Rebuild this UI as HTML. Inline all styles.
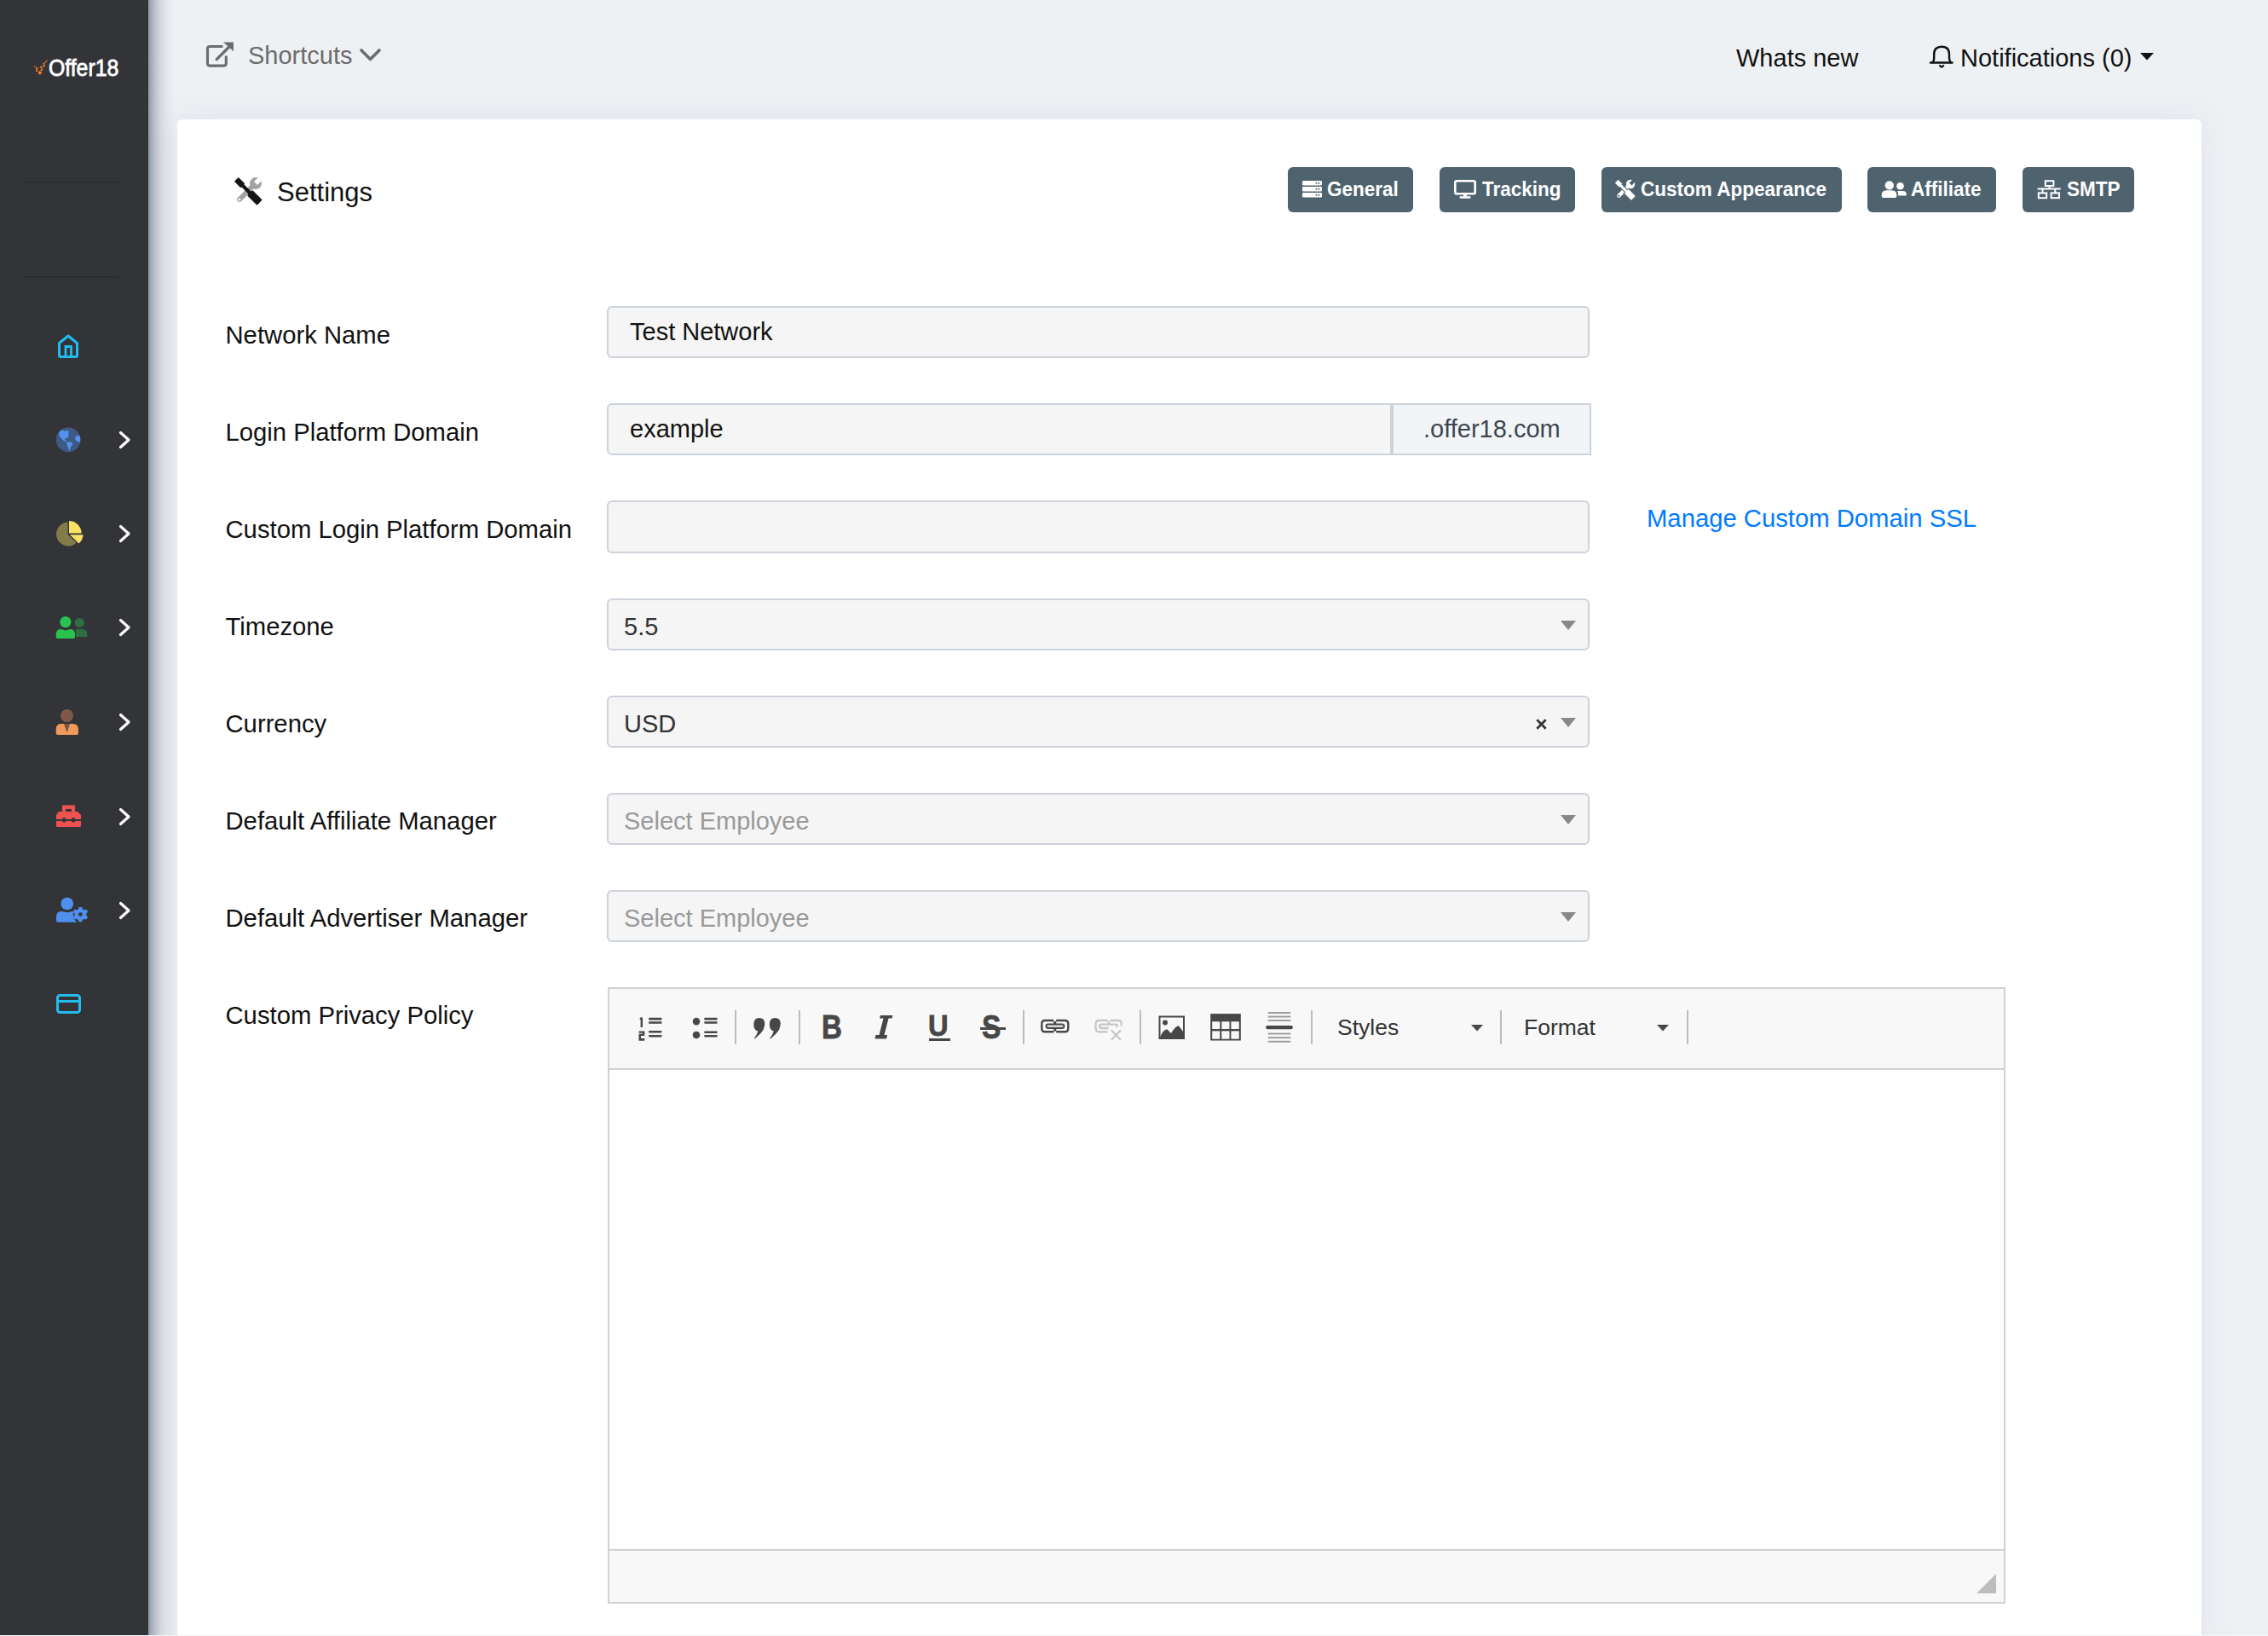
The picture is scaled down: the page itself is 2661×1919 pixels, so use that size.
<!DOCTYPE html><html><head><meta charset="utf-8"><style>
html,body{margin:0;padding:0;}
body{width:2661px;height:1919px;overflow:hidden;background:#eef1f4;position:relative;font-family:'Liberation Sans', sans-serif;}
.a{position:absolute;}
</style></head><body>
<div class="a" style="left:0;top:0;width:174px;height:1919px;background:#333438;"></div>
<div class="a" style="left:174px;top:0;width:34px;height:1919px;background:linear-gradient(90deg,#8f99a8 0px,#a3abb8 3px,#bcc3ce 8px,#d3d8e0 14px,#e3e7ec 21px,#eef1f4 32px);"></div>
<svg class="a" style="left:36px;top:68px" width="24" height="22" viewBox="36 68 24 22">
<g fill="#f57c20">
<rect x="45" y="83.6" width="3.6" height="3.6" rx="0.6"/>
<rect x="42" y="81.8" width="2.2" height="2.2" rx="0.4"/>
<rect x="41.9" y="79.3" width="2.3" height="2.3" rx="0.4"/>
<rect x="40" y="77" width="1.8" height="1.8" rx="0.4" opacity="0.8"/>
<rect x="47.7" y="80.6" width="2.3" height="2.3" rx="0.4"/>
<rect x="47.2" y="77.5" width="2.3" height="2.3" rx="0.4"/>
<rect x="50.6" y="75.6" width="2.3" height="2.3" rx="0.4"/>
<rect x="50.5" y="73.4" width="1.8" height="1.8" rx="0.4"/>
<rect x="52.6" y="72.5" width="1.5" height="1.5" rx="0.3"/>
<rect x="54.2" y="70.8" width="1.4" height="1.4" rx="0.3"/>
<rect x="49.8" y="78.8" width="1.2" height="1.2" rx="0.3"/>
<rect x="44.8" y="78.8" width="1" height="1" rx="0.3"/>
</g></svg>
<div style="position:absolute;left:57px;top:66px;font:400 28px/28px 'Liberation Sans', sans-serif;color:#fff;white-space:pre;transform:scaleX(0.885);transform-origin:0 0;-webkit-text-stroke:0.8px #fff;">Offer18</div>
<div class="a" style="left:28px;top:213px;width:112px;height:2px;background:#2b2c30;"></div>
<div class="a" style="left:28px;top:324px;width:112px;height:2px;background:#2b2c30;"></div>
<svg class="a" style="left:134px;top:500px" width="24" height="32" viewBox="0 0 24 32"><path d="M7.5 7.5 L17 16 L7.5 24.5" fill="none" stroke="#fff" stroke-width="3.2" stroke-linecap="round" stroke-linejoin="round"/></svg>
<svg class="a" style="left:134px;top:610px" width="24" height="32" viewBox="0 0 24 32"><path d="M7.5 7.5 L17 16 L7.5 24.5" fill="none" stroke="#fff" stroke-width="3.2" stroke-linecap="round" stroke-linejoin="round"/></svg>
<svg class="a" style="left:134px;top:720px" width="24" height="32" viewBox="0 0 24 32"><path d="M7.5 7.5 L17 16 L7.5 24.5" fill="none" stroke="#fff" stroke-width="3.2" stroke-linecap="round" stroke-linejoin="round"/></svg>
<svg class="a" style="left:134px;top:831px" width="24" height="32" viewBox="0 0 24 32"><path d="M7.5 7.5 L17 16 L7.5 24.5" fill="none" stroke="#fff" stroke-width="3.2" stroke-linecap="round" stroke-linejoin="round"/></svg>
<svg class="a" style="left:134px;top:942px" width="24" height="32" viewBox="0 0 24 32"><path d="M7.5 7.5 L17 16 L7.5 24.5" fill="none" stroke="#fff" stroke-width="3.2" stroke-linecap="round" stroke-linejoin="round"/></svg>
<svg class="a" style="left:134px;top:1052px" width="24" height="32" viewBox="0 0 24 32"><path d="M7.5 7.5 L17 16 L7.5 24.5" fill="none" stroke="#fff" stroke-width="3.2" stroke-linecap="round" stroke-linejoin="round"/></svg>
<svg class="a" style="left:60px;top:385px" width="40" height="40" viewBox="0 0 40 40"><path d="M9.5 17.5 L20 9 L30.5 17.5 L30.5 32 Q30.5 33.5 29 33.5 L11 33.5 Q9.5 33.5 9.5 32 Z" fill="none" stroke="#22bdee" stroke-width="3" stroke-linejoin="round"/><path d="M17 33.5 V21.5 H23.5 V33.5" fill="none" stroke="#22bdee" stroke-width="2.8"/></svg>
<svg class="a" style="left:60px;top:496px" width="40" height="40" viewBox="0 0 40 40">
<circle cx="20.1" cy="19.9" r="14.3" fill="#3e5a84"/>
<path d="M9.4 11.1 Q11 8.5 13.3 8.2 Q15 9 16.4 10.2 Q17.5 8.8 19.1 9 Q21.2 9.8 21 11.1 Q20.2 12.3 20.4 13.6 Q20.5 16.5 19.5 17.8 Q17.5 17.6 16.4 18.4 Q15.3 19.2 16.5 20 Q18 20.8 18.5 21.5 Q16 21.5 14.9 20.9 Q13 19.8 12.1 18.4 Q9.5 16 9.1 13.6 Z" fill="#5591ef"/>
<path d="M18.2 22.4 Q21.5 22 24 22.7 Q25.6 23.6 25.3 24.9 Q24.5 26.5 23.4 27.6 Q22.6 30.5 21.6 32.8 Q20.4 31.5 20.1 29.8 Q19.5 27.5 18.6 25.5 Q17.8 23.5 18.2 22.4 Z" fill="#5591ef"/>
<path d="M28 18.1 Q28.8 15.5 30.5 15.1 L32.9 15.1 Q34 16 34.3 18.4 Q34.4 20.5 33.8 22.7 Q31.5 22.5 30.1 21.5 Q28.3 20 28 18.1 Z" fill="#5591ef"/>
</svg>
<svg class="a" style="left:60px;top:606px" width="40" height="40" viewBox="0 0 40 40">
<path d="M19.5 6.5 L19.5 21 L29.8 30.5 A14 14 0 1 1 19.5 6.5 Z" fill="#827b4a"/>
<path d="M21 5 A14.6 14.6 0 0 1 35.6 19.6 L21 19.6 Z" fill="#fbe066"/>
<path d="M22 21.2 L37.5 21.2 A14.5 14.5 0 0 1 32.5 31.5 Z" fill="#fbe066"/>
</svg>
<svg class="a" style="left:60px;top:716px" width="48" height="40" viewBox="0 0 48 40">
<circle cx="33.2" cy="14.5" r="5.6" fill="#2e6e42"/>
<path d="M29 22 H37 Q42.2 22 42.2 27.5 V31 H29 Z" fill="#2e6e42"/>
<circle cx="16.9" cy="13.6" r="6.6" fill="#28c34f"/>
<path d="M11 22 Q13 22 14 22.8 Q16.9 24.2 19.8 22.8 Q20.8 22 22.8 22 Q28 22 28 28.5 V31 Q28 33.1 26 33.1 L7.7 33.1 Q5.7 33.1 5.7 31 V28.5 Q5.7 22 11 22 Z" fill="#28c34f"/>
</svg>
<svg class="a" style="left:60px;top:826px" width="40" height="40" viewBox="0 0 40 40">
<circle cx="18.5" cy="13.6" r="7.5" fill="#7d5a45"/>
<path d="M11.5 23 L15.2 23 L18.5 33 L21.8 23 L25.5 23 Q32 23 32 30 V33.5 Q32 36 29.5 36 L8 36 Q5.7 36 5.7 33.5 V30 Q5.7 23 11.5 23 Z" fill="#ef9a5c"/>
<path d="M15.8 23 L21.2 23 L18.5 32.5 Z" fill="#7d5a45"/>
</svg>
<svg class="a" style="left:60px;top:936px" width="40" height="40" viewBox="0 0 40 40">
<path d="M13 8.7 Q13 8.5 14 8.5 H27 Q28 8.5 28 9.5 V16 H23.9 V13.1 H17.2 V16 H13 Z" fill="#ef5050"/>
<path d="M9 16 H31 L35 20 V25 H28 V23.3 H24.3 V25 H17 V23.3 H13.3 V25 H6 V20 Z" fill="#ef5050"/>
<path d="M6 27 H13.3 V28.5 H17 V27 H24.3 V28.5 H28 V27 H35 V32.5 Q35 34 33.5 34 H7.5 Q6 34 6 32.5 Z" fill="#ef5050"/>
</svg>
<svg class="a" style="left:60px;top:1046px" width="48" height="40" viewBox="0 0 48 40">
<circle cx="18.8" cy="14" r="7.3" fill="#4f8fef"/>
<path d="M12 23 Q14 23 15 23.6 Q18.8 25 22.6 23.6 Q24 23 25.5 23 L27 23.3 Q25 26 26 29 Q26.5 33 30.5 35.8 L8 35.8 Q6 35.8 6 33.8 V29 Q6 23 12 23 Z" fill="#4f8fef"/>
<g transform="translate(34.4,26.6)" fill="#4f8fef">
<path d="M-1.9 -8.6 H1.9 L2.3 -6.3 Q3.6 -5.9 4.6 -5.1 L6.8 -6 L8.7 -2.8 L6.9 -1.3 Q7.1 0 6.9 1.3 L8.7 2.8 L6.8 6 L4.6 5.1 Q3.6 5.9 2.3 6.3 L1.9 8.6 H-1.9 L-2.3 6.3 Q-3.6 5.9 -4.6 5.1 L-6.8 6 L-8.7 2.8 L-6.9 1.3 Q-7.1 0 -6.9 -1.3 L-8.7 -2.8 L-6.8 -6 L-4.6 -5.1 Q-3.6 -5.9 -2.3 -6.3 Z M0 -2.4 A2.4 2.4 0 1 0 0 2.4 A2.4 2.4 0 1 0 0 -2.4 Z" fill-rule="evenodd"/>
</g></svg>
<svg class="a" style="left:60px;top:1156px" width="40" height="40" viewBox="0 0 40 40"><rect x="7.5" y="11.5" width="26" height="20" rx="3" fill="none" stroke="#22bdee" stroke-width="3"/><line x1="7.5" y1="18.5" x2="33.5" y2="18.5" stroke="#22bdee" stroke-width="3"/></svg>
<svg class="a" style="left:240px;top:46px" width="36" height="36" viewBox="0 0 36 36"><path d="M21.5 8.5 H6 Q3.5 8.5 3.5 11 V28.6 Q3.5 31.1 6 31.1 H22.8 Q25.3 31.1 25.3 28.6 V19.6" fill="none" stroke="#6c6c6c" stroke-width="3.1"/><path d="M14.2 23.6 L28.3 9.5" stroke="#6c6c6c" stroke-width="3.3" stroke-linecap="round"/><path d="M22 3.6 H34 V14.2 Z" fill="#6c6c6c"/></svg>
<div style="position:absolute;left:291px;top:51px;font:400 29px/29px 'Liberation Sans', sans-serif;color:#6c6c6c;white-space:pre;">Shortcuts</div>
<svg class="a" style="left:420px;top:53px" width="30" height="24" viewBox="0 0 30 24"><path d="M4 6 L14.5 16.5 L25 6" fill="none" stroke="#6c6c6c" stroke-width="3.6" stroke-linecap="round" stroke-linejoin="round"/></svg>
<div style="position:absolute;left:2037px;top:54px;font:400 29px/29px 'Liberation Sans', sans-serif;color:#111;white-space:pre;">Whats new</div>
<svg class="a" style="left:2262px;top:53px" width="32" height="30" viewBox="0 0 32 30"><path d="M3 20.5 H28.5" stroke="#111" stroke-width="2.4" stroke-linecap="round"/><path d="M5 20.4 Q7.2 18.8 7.2 15 V10.5 Q7.2 1.8 16.1 1.8 Q25 1.8 25 10.5 V15 Q25 18.8 27.2 20.4" fill="none" stroke="#111" stroke-width="2.4"/><path d="M13.6 23.2 Q16.1 27.8 18.6 23.2" fill="none" stroke="#111" stroke-width="2.3"/></svg>
<div style="position:absolute;left:2300px;top:54px;font:400 29px/29px 'Liberation Sans', sans-serif;color:#111;white-space:pre;">Notifications (0)</div>
<svg class="a" style="left:2510px;top:60px" width="18" height="12" viewBox="0 0 18 12"><path d="M1 2 H17 L9 10.5 Z" fill="#111"/></svg>
<div class="a" style="left:208px;top:140px;width:2375px;height:1800px;background:#fff;border-radius:6px;box-shadow:0 0 38px rgba(120,132,155,0.13);"></div>
<svg class="a" style="left:271px;top:204px" width="40" height="40" viewBox="-21.2 -21.2 42.4 42.4">
<g transform="rotate(-45)" fill="#a3a3a3">
<rect x="-18" y="-3.1" width="29" height="6.2" rx="3.1"/>
<circle cx="13.5" cy="0" r="7.4"/>
<rect x="13.5" y="-2.9" width="9" height="5.8" fill="#fff"/>
<circle cx="-15" cy="0" r="1.5" fill="#fff"/>
</g>
<g transform="rotate(45)" fill="#151515">
<rect x="-20.5" y="-3.7" width="11.5" height="7.4" rx="1.2"/>
<rect x="-10" y="-2.2" width="14" height="4.4"/>
<rect x="3" y="-4.7" width="17.5" height="9.4" rx="1.6"/>
</g>
</svg>
<div style="position:absolute;left:325px;top:210px;font:400 31px/31px 'Liberation Sans', sans-serif;color:#111;white-space:pre;">Settings</div>
<div class="a" style="left:1511px;top:196px;width:147px;height:53px;background:#4f636f;border-radius:6px;"></div>
<div class="a" style="left:1689px;top:196px;width:159px;height:53px;background:#4f636f;border-radius:6px;"></div>
<div class="a" style="left:1879px;top:196px;width:282px;height:53px;background:#4f636f;border-radius:6px;"></div>
<div class="a" style="left:2191px;top:196px;width:151px;height:53px;background:#4f636f;border-radius:6px;"></div>
<div class="a" style="left:2373px;top:196px;width:131px;height:53px;background:#4f636f;border-radius:6px;"></div>
<svg class="a" style="left:1528px;top:212px" width="23" height="20" viewBox="0 0 23 20">
<g fill="#fff"><rect x="0" y="0" width="23" height="5.6" rx="1.3"/><rect x="0" y="7" width="23" height="5.6" rx="1.3"/><rect x="0" y="14" width="23" height="5.6" rx="1.3"/></g>
<g fill="#4f636f"><circle cx="16.5" cy="2.8" r="1"/><circle cx="19.5" cy="2.8" r="1"/><circle cx="16.5" cy="9.8" r="1"/><circle cx="19.5" cy="9.8" r="1"/><circle cx="16.5" cy="16.8" r="1"/><circle cx="19.5" cy="16.8" r="1"/></g></svg>
<div style="position:absolute;left:1557px;top:211px;font:700 23.5px/23.5px 'Liberation Sans', sans-serif;color:#fff;white-space:pre;transform:scaleX(0.958);transform-origin:0 0;">General</div>
<svg class="a" style="left:1706px;top:211px" width="26" height="22" viewBox="0 0 26 22"><rect x="1.3" y="1.3" width="23.4" height="15" rx="1.8" fill="none" stroke="#fff" stroke-width="2.6"/><rect x="11" y="16" width="4" height="3.5" fill="#fff"/><rect x="6.5" y="19.3" width="13" height="2.4" rx="1" fill="#fff"/></svg>
<div style="position:absolute;left:1739px;top:211px;font:700 23.5px/23.5px 'Liberation Sans', sans-serif;color:#fff;white-space:pre;transform:scaleX(0.958);transform-origin:0 0;">Tracking</div>
<svg class="a" style="left:1892px;top:208px" width="29" height="29" viewBox="-21.2 -21.2 42.4 42.4">
<g transform="rotate(-45)" fill="#fff">
<rect x="-18" y="-3.3" width="29" height="6.6" rx="3.3"/>
<circle cx="13.5" cy="0" r="7.6"/>
<rect x="13.5" y="-3" width="9" height="6" fill="#4f636f"/>
<circle cx="-14.8" cy="0" r="1.6" fill="#4f636f"/>
</g>
<g transform="rotate(45)" fill="#fff" stroke="#4f636f" stroke-width="1.5">
<path d="M-21 -4.6 H-9.5 V-3 H3 V-5.8 H19.8 Q21.2 -5.8 21.2 -4.4 V4.4 Q21.2 5.8 19.8 5.8 H3 V3 H-9.5 V4.6 H-21 Z"/>
</g>
</svg>
<div style="position:absolute;left:1925px;top:211px;font:700 23.5px/23.5px 'Liberation Sans', sans-serif;color:#fff;white-space:pre;transform:scaleX(0.958);transform-origin:0 0;">Custom Appearance</div>
<svg class="a" style="left:2207px;top:210px" width="31" height="24" viewBox="0 0 31 24">
<circle cx="22.5" cy="8.3" r="4.3" fill="#fff"/><path d="M19.2 14 H25.5 Q29.8 14 29.8 18.2 Q29.8 19.6 28.4 19.6 H20.3 Q20.3 16 19.2 14 Z" fill="#fff"/>
<circle cx="9.8" cy="7.4" r="5.2" fill="#fff"/><path d="M0.6 19.5 Q0.6 13.3 6.5 13.3 H12.5 Q18.4 13.3 18.4 19.5 V20 Q18.4 22.1 16.3 22.1 H2.7 Q0.6 22.1 0.6 20 Z" fill="#fff"/>
</svg>
<div style="position:absolute;left:2242px;top:211px;font:700 23.5px/23.5px 'Liberation Sans', sans-serif;color:#fff;white-space:pre;transform:scaleX(0.958);transform-origin:0 0;">Affiliate</div>
<svg class="a" style="left:2388px;top:209px" width="32" height="26" viewBox="0 0 32 26">
<g fill="none" stroke="#fff" stroke-width="2"><rect x="11.8" y="3.2" width="9.6" height="5.8"/><rect x="3.8" y="17.4" width="9.4" height="5.8"/><rect x="18.6" y="17.4" width="9.4" height="5.8"/>
<path d="M16.6 9 V12.4 M2.6 12.4 H29.7 M8.5 12.4 V17.4 M23.3 12.4 V17.4"/></g></svg>
<div style="position:absolute;left:2425px;top:211px;font:700 23.5px/23.5px 'Liberation Sans', sans-serif;color:#fff;white-space:pre;transform:scaleX(0.958);transform-origin:0 0;">SMTP</div>
<div style="position:absolute;left:264.5px;top:379px;font:400 29.25px/29.25px 'Liberation Sans', sans-serif;color:#111;white-space:pre;">Network Name</div>
<div style="position:absolute;left:264.5px;top:493px;font:400 29.25px/29.25px 'Liberation Sans', sans-serif;color:#111;white-space:pre;">Login Platform Domain</div>
<div style="position:absolute;left:264.5px;top:607px;font:400 29.25px/29.25px 'Liberation Sans', sans-serif;color:#111;white-space:pre;">Custom Login Platform Domain</div>
<div style="position:absolute;left:264.5px;top:721px;font:400 29.25px/29.25px 'Liberation Sans', sans-serif;color:#111;white-space:pre;">Timezone</div>
<div style="position:absolute;left:264.5px;top:835px;font:400 29.25px/29.25px 'Liberation Sans', sans-serif;color:#111;white-space:pre;">Currency</div>
<div style="position:absolute;left:264.5px;top:949px;font:400 29.25px/29.25px 'Liberation Sans', sans-serif;color:#111;white-space:pre;">Default Affiliate Manager</div>
<div style="position:absolute;left:264.5px;top:1063px;font:400 29.25px/29.25px 'Liberation Sans', sans-serif;color:#111;white-space:pre;">Default Advertiser Manager</div>
<div style="position:absolute;left:264.5px;top:1177px;font:400 29.25px/29.25px 'Liberation Sans', sans-serif;color:#111;white-space:pre;">Custom Privacy Policy</div>
<div class="a" style="left:712px;top:359px;width:1149px;height:57px;background:#f5f5f5;border:2px solid #cdd3da;border-radius:6px;"></div>
<div style="position:absolute;left:739px;top:375px;font:400 29px/29px 'Liberation Sans', sans-serif;color:#111;white-space:pre;">Test Network</div>
<div class="a" style="left:712px;top:473px;width:917px;height:57px;background:#f5f5f5;border:2px solid #cdd3da;border-radius:6px 0 0 6px;"></div>
<div class="a" style="left:1633px;top:473px;width:230px;height:57px;background:#f2f5f8;border:2px solid #cdd3da;"></div>
<div style="position:absolute;left:739px;top:489px;font:400 29px/29px 'Liberation Sans', sans-serif;color:#111;white-space:pre;">example</div>
<div style="position:absolute;left:1670px;top:489px;font:400 29px/29px 'Liberation Sans', sans-serif;color:#3d4650;white-space:pre;">.offer18.com</div>
<div class="a" style="left:712px;top:587px;width:1149px;height:58px;background:#f5f5f5;border:2px solid #cdd3da;border-radius:6px;"></div>
<div style="position:absolute;left:1932px;top:594px;font:400 29.25px/29.25px 'Liberation Sans', sans-serif;color:#007bff;white-space:pre;">Manage Custom Domain SSL</div>
<div class="a" style="left:712px;top:702px;width:1149px;height:57px;background:#f5f5f5;border:2px solid #cdd3da;border-radius:6px;"></div>
<div style="position:absolute;left:732px;top:720.5px;font:400 29px/29px 'Liberation Sans', sans-serif;color:#333;white-space:pre;">5.5</div>
<svg class="a" style="left:1831px;top:728px" width="18" height="11" viewBox="0 0 18 11"><path d="M0 0 H18 L9 11 Z" fill="#888"/></svg>
<div class="a" style="left:712px;top:816px;width:1149px;height:57px;background:#f5f5f5;border:2px solid #cdd3da;border-radius:6px;"></div>
<div style="position:absolute;left:732px;top:834.5px;font:400 29px/29px 'Liberation Sans', sans-serif;color:#333;white-space:pre;">USD</div>
<svg class="a" style="left:1831px;top:842px" width="18" height="11" viewBox="0 0 18 11"><path d="M0 0 H18 L9 11 Z" fill="#888"/></svg>
<svg class="a" style="left:1801px;top:842px" width="15" height="15" viewBox="0 0 15 15"><path d="M2.3 2.3 L12.7 12.7 M12.7 2.3 L2.3 12.7" stroke="#333" stroke-width="2.7"/></svg>
<div class="a" style="left:712px;top:930px;width:1149px;height:57px;background:#f5f5f5;border:2px solid #cdd3da;border-radius:6px;"></div>
<div style="position:absolute;left:732px;top:948.5px;font:400 29px/29px 'Liberation Sans', sans-serif;color:#999;white-space:pre;">Select Employee</div>
<svg class="a" style="left:1831px;top:956px" width="18" height="11" viewBox="0 0 18 11"><path d="M0 0 H18 L9 11 Z" fill="#888"/></svg>
<div class="a" style="left:712px;top:1044px;width:1149px;height:57px;background:#f5f5f5;border:2px solid #cdd3da;border-radius:6px;"></div>
<div style="position:absolute;left:732px;top:1062.5px;font:400 29px/29px 'Liberation Sans', sans-serif;color:#999;white-space:pre;">Select Employee</div>
<svg class="a" style="left:1831px;top:1070px" width="18" height="11" viewBox="0 0 18 11"><path d="M0 0 H18 L9 11 Z" fill="#888"/></svg>
<div class="a" style="left:713px;top:1158px;width:1636px;height:719px;border:2px solid #d1d1d1;background:#fff;"></div>
<div class="a" style="left:715px;top:1160px;width:1636px;height:93px;background:#f8f8f8;border-bottom:2px solid #d1d1d1;"></div>
<div class="a" style="left:715px;top:1817px;width:1636px;height:62px;background:#f8f8f8;border-top:2px solid #d1d1d1;box-sizing:border-box;"></div>
<svg class="a" style="left:2318px;top:1846px" width="24" height="24" viewBox="0 0 24 24"><path d="M24 0 V23 H1 Z" fill="#bdbdbd"/></svg>
<div class="a" style="left:862px;top:1185px;width:2px;height:40px;background:#bcbcbc;"></div>
<div class="a" style="left:937px;top:1185px;width:2px;height:40px;background:#bcbcbc;"></div>
<div class="a" style="left:1200px;top:1185px;width:2px;height:40px;background:#bcbcbc;"></div>
<div class="a" style="left:1337px;top:1185px;width:2px;height:40px;background:#bcbcbc;"></div>
<div class="a" style="left:1538px;top:1185px;width:2px;height:40px;background:#bcbcbc;"></div>
<div class="a" style="left:1760px;top:1185px;width:2px;height:40px;background:#bcbcbc;"></div>
<div class="a" style="left:1979px;top:1185px;width:2px;height:40px;background:#bcbcbc;"></div>
<svg class="a" style="left:746px;top:1190px" width="34" height="34" viewBox="0 0 34 34" fill="#474747">
<path d="M5 3.5 H8 V15 H5.6 V6 H4.5 Z"/>
<path d="M3.5 19.5 H10.3 V25 H6 V28 H10.3 V30.7 H3.5 V22.8 H7.8 V21.7 H3.5 Z"/>
<rect x="15" y="3.8" width="15.5" height="2.6" rx="1"/><rect x="15" y="8.2" width="15.5" height="2.6" rx="1"/>
<rect x="15" y="19" width="15.5" height="2.6" rx="1"/><rect x="15" y="23.9" width="15.5" height="2.6" rx="1"/>
</svg>
<svg class="a" style="left:810px;top:1190px" width="34" height="34" viewBox="0 0 34 34" fill="#474747">
<circle cx="7" cy="8.1" r="4.3"/><circle cx="7" cy="24" r="4.3"/>
<rect x="16.2" y="3.8" width="15.5" height="2.6" rx="1"/><rect x="16.2" y="8.2" width="15.5" height="2.6" rx="1"/>
<rect x="16.2" y="19.4" width="15.5" height="2.6" rx="1"/><rect x="16.2" y="23.9" width="15.5" height="2.6" rx="1"/>
</svg>
<svg class="a" style="left:882px;top:1190px" width="38" height="34" viewBox="0 0 38 34" fill="#474747">
<path d="M8.8 4 Q15 4 15.3 10 Q15.3 17 10.5 22 Q7 25.5 3.5 28.5 L2.8 27.8 Q6 24 7.3 19.5 Q2.3 18.5 2.3 11.2 Q2.5 4 8.8 4 Z"/>
<path d="M27.3 4 Q33.5 4 33.8 10 Q33.8 17 29 22 Q25.5 25.5 22 28.5 L21.3 27.8 Q24.5 24 25.8 19.5 Q20.8 18.5 20.8 11.2 Q21 4 27.3 4 Z"/>
</svg>
<div style="position:absolute;left:964px;top:1186px;font:700 38.5px/38.5px 'Liberation Sans', sans-serif;color:#474747;white-space:pre;-webkit-text-stroke:0.8px #474747;transform:scaleX(0.86);transform-origin:left;">B</div>
<svg class="a" style="left:1025px;top:1190px" width="24" height="30" viewBox="0 0 24 30" fill="#474747"><path d="M8 1 H22.5 L21.5 4.5 H17.5 L12.5 24 H16 L15 28.5 H1.5 L2.5 24 H6.5 L11.5 4.5 H7 Z"/></svg>
<div style="position:absolute;left:1089px;top:1186px;font:700 35.5px/35.5px 'Liberation Sans', sans-serif;color:#474747;white-space:pre;-webkit-text-stroke:0.8px #474747;transform:scaleX(0.92);transform-origin:left;">U</div>
<div class="a" style="left:1090px;top:1218px;width:25px;height:2.5px;background:#474747;"></div>
<div style="position:absolute;left:1152px;top:1186px;font:700 38.5px/38.5px 'Liberation Sans', sans-serif;color:#474747;white-space:pre;-webkit-text-stroke:0.8px #474747;transform:scaleX(0.87);transform-origin:left;">S</div>
<div class="a" style="left:1150px;top:1205px;width:30px;height:2.5px;background:#474747;"></div>
<svg class="a" style="left:1220px;top:1192px" width="36" height="24" viewBox="0 0 36 24">
<g fill="none" stroke="#474747" stroke-width="2.4">
<path d="M16.3 5 H6 Q2.3 5 2.3 9 V14 Q2.3 18.3 6 18.3 H16.3"/><path d="M19.2 5 H29.5 Q33.3 5 33.3 9 V14 Q33.3 18.3 29.5 18.3 H19.2"/>
<rect x="7.6" y="9.6" width="20.8" height="4.4" rx="2.2" fill="#dcdcdc" stroke-width="2"/></g>
<rect x="16.2" y="6" width="3.1" height="3.6" fill="#474747"/><rect x="16.2" y="14" width="3.1" height="3.6" fill="#474747"/>
</svg>
<svg class="a" style="left:1283px;top:1192px" width="36" height="32" viewBox="0 0 36 32">
<g fill="none" stroke="#c6c6c6" stroke-width="2.3">
<path d="M16.6 5 H6.3 Q2.6 5 2.6 9 V14 Q2.6 18.3 6.3 18.3 H16.6"/><path d="M19.3 5 H28.8 Q32.8 5 32.8 9 V11.5"/>
<path d="M17.6 14 H9.2 Q7 14 7 11.8 Q7 9.6 9.2 9.6 H27 Q28.8 10.4 26.8 12.8"/>
<path d="M21 16.5 L32 27.8 M32 16.5 L21 27.8"/></g>
<rect x="16.4" y="6" width="3" height="3.6" fill="#c6c6c6"/>
</svg>
<svg class="a" style="left:1358px;top:1190px" width="34" height="32" viewBox="0 0 34 32">
<rect x="2.5" y="2.5" width="28.5" height="25.5" fill="none" stroke="#474747" stroke-width="2"/>
<circle cx="9" cy="9.4" r="3" fill="#474747"/>
<path d="M3.3 27 L3.5 25.5 Q5.5 20.5 8 18.8 L11 17.3 Q13 18.5 14.6 21 L16.2 21.7 Q18.8 17.5 21 15.2 L24.5 13 Q27 15.5 30 20 V27.5 H3.3 Z" fill="#474747"/>
</svg>
<svg class="a" style="left:1418px;top:1188px" width="40" height="34" viewBox="0 0 40 34">
<rect x="2.2" y="1.1" width="35.6" height="31.4" fill="#474747"/>
<g fill="#f8f8f8"><rect x="4.2" y="10.3" width="9.1" height="8.7"/><rect x="15.3" y="10.3" width="9.2" height="8.7"/><rect x="26.4" y="10.3" width="9.4" height="8.7"/>
<rect x="4.2" y="21.4" width="9.1" height="9.3"/><rect x="15.3" y="21.4" width="9.2" height="9.3"/><rect x="26.4" y="21.4" width="9.4" height="9.3"/></g>
</svg>
<svg class="a" style="left:1484px;top:1185px" width="34" height="40" viewBox="0 0 34 40">
<g fill="#9a9a9a"><rect x="3.7" y="2.1" width="26.6" height="1.9"/><rect x="3.7" y="6.6" width="26.6" height="1.9"/><rect x="3.7" y="11.1" width="26.6" height="1.9"/>
<rect x="3.7" y="26.6" width="26.6" height="1.9"/><rect x="3.7" y="31.2" width="26.6" height="1.9"/><rect x="3.7" y="35.8" width="26.6" height="1.9"/></g>
<rect x="1.3" y="18" width="31.4" height="4.2" rx="1.6" fill="#474747"/>
</svg>
<div style="position:absolute;left:1569px;top:1192px;font:400 26.5px/26.5px 'Liberation Sans', sans-serif;color:#333;white-space:pre;">Styles</div>
<svg class="a" style="left:1726px;top:1202px" width="14" height="8" viewBox="0 0 14 8"><path d="M0 0 H14 L7 7.5 Z" fill="#474747"/></svg>
<div style="position:absolute;left:1788px;top:1192px;font:400 26.5px/26.5px 'Liberation Sans', sans-serif;color:#333;white-space:pre;">Format</div>
<svg class="a" style="left:1944px;top:1202px" width="14" height="8" viewBox="0 0 14 8"><path d="M0 0 H14 L7 7.5 Z" fill="#474747"/></svg>
<div class="a" style="left:0;top:1918px;width:2661px;height:1px;background:#f3f5f7;"></div>
</body></html>
